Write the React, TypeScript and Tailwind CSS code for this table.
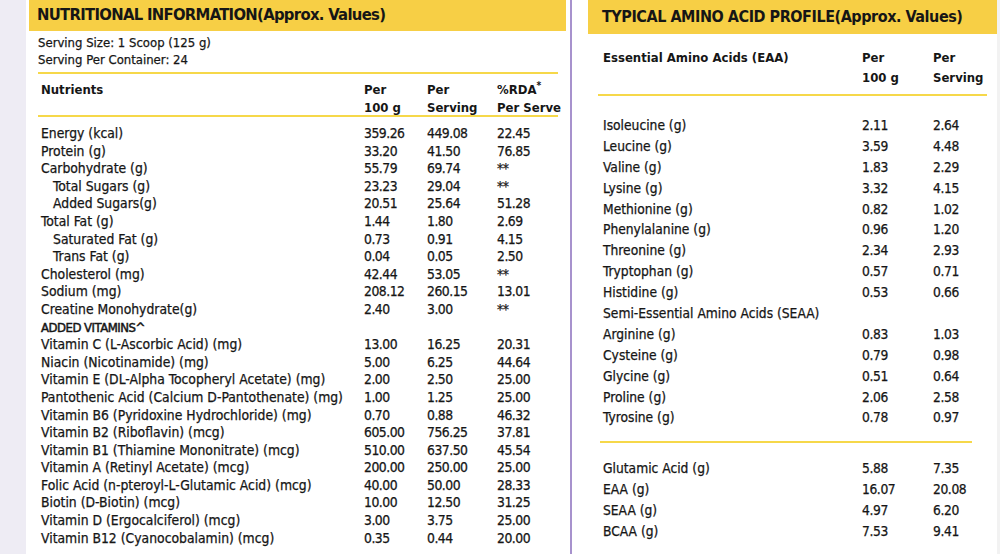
import React from "react";

type Row = { l: string; a?: string; b?: string; c?: string; i?: boolean; bold?: boolean };

const left: Row[] = [
  { l: "Energy (kcal)", a: "359.26", b: "449.08", c: "22.45" },
  { l: "Protein (g)", a: "33.20", b: "41.50", c: "76.85" },
  { l: "Carbohydrate (g)", a: "55.79", b: "69.74", c: "**" },
  { l: "Total Sugars (g)", a: "23.23", b: "29.04", c: "**", i: true },
  { l: "Added Sugars(g)", a: "20.51", b: "25.64", c: "51.28", i: true },
  { l: "Total Fat (g)", a: "1.44", b: "1.80", c: "2.69" },
  { l: "Saturated Fat (g)", a: "0.73", b: "0.91", c: "4.15", i: true },
  { l: "Trans Fat (g)", a: "0.04", b: "0.05", c: "2.50", i: true },
  { l: "Cholesterol (mg)", a: "42.44", b: "53.05", c: "**" },
  { l: "Sodium (mg)", a: "208.12", b: "260.15", c: "13.01" },
  { l: "Creatine Monohydrate(g)", a: "2.40", b: "3.00", c: "**" },
  { l: "ADDED VITAMINS^", bold: true },
  { l: "Vitamin C (L-Ascorbic Acid) (mg)", a: "13.00", b: "16.25", c: "20.31" },
  { l: "Niacin (Nicotinamide) (mg)", a: "5.00", b: "6.25", c: "44.64" },
  { l: "Vitamin E (DL-Alpha Tocopheryl Acetate) (mg)", a: "2.00", b: "2.50", c: "25.00" },
  { l: "Pantothenic Acid (Calcium D-Pantothenate) (mg)", a: "1.00", b: "1.25", c: "25.00" },
  { l: "Vitamin B6 (Pyridoxine Hydrochloride) (mg)", a: "0.70", b: "0.88", c: "46.32" },
  { l: "Vitamin B2 (Riboflavin) (mcg)", a: "605.00", b: "756.25", c: "37.81" },
  { l: "Vitamin B1 (Thiamine Mononitrate) (mcg)", a: "510.00", b: "637.50", c: "45.54" },
  { l: "Vitamin A (Retinyl Acetate) (mcg)", a: "200.00", b: "250.00", c: "25.00" },
  { l: "Folic Acid (n-pteroyl-L-Glutamic Acid) (mcg)", a: "40.00", b: "50.00", c: "28.33" },
  { l: "Biotin (D-Biotin) (mcg)", a: "10.00", b: "12.50", c: "31.25" },
  { l: "Vitamin D (Ergocalciferol) (mcg)", a: "3.00", b: "3.75", c: "25.00" },
  { l: "Vitamin B12 (Cyanocobalamin) (mcg)", a: "0.35", b: "0.44", c: "20.00" },
];

const rightTop: Row[] = [
  { l: "Isoleucine (g)", a: "2.11", b: "2.64" },
  { l: "Leucine (g)", a: "3.59", b: "4.48" },
  { l: "Valine (g)", a: "1.83", b: "2.29" },
  { l: "Lysine (g)", a: "3.32", b: "4.15" },
  { l: "Methionine (g)", a: "0.82", b: "1.02" },
  { l: "Phenylalanine (g)", a: "0.96", b: "1.20" },
  { l: "Threonine (g)", a: "2.34", b: "2.93" },
  { l: "Tryptophan (g)", a: "0.57", b: "0.71" },
  { l: "Histidine (g)", a: "0.53", b: "0.66" },
  { l: "Semi-Essential Amino Acids (SEAA)" },
  { l: "Arginine (g)", a: "0.83", b: "1.03" },
  { l: "Cysteine (g)", a: "0.79", b: "0.98" },
  { l: "Glycine (g)", a: "0.51", b: "0.64" },
  { l: "Proline (g)", a: "2.06", b: "2.58" },
  { l: "Tyrosine (g)", a: "0.78", b: "0.97" },
];

const rightBottom: Row[] = [
  { l: "Glutamic Acid (g)", a: "5.88", b: "7.35" },
  { l: "EAA (g)", a: "16.07", b: "20.08" },
  { l: "SEAA (g)", a: "4.97", b: "6.20" },
  { l: "BCAA (g)", a: "7.53", b: "9.41" },
];

function LeftRow({ r }: { r: Row }) {
  return (
    <div className="grid grid-cols-[323px_63px_70px_60px] h-[17.6px] leading-[17.6px]">
      <div
        className={
          r.bold
            ? "whitespace-nowrap text-[13px] tracking-[-0.5px] [-webkit-text-stroke-width:0.5px]"
            : r.i
            ? "whitespace-nowrap pl-[12px]"
            : "whitespace-nowrap"
        }
      >
        {r.l}
      </div>
      <div className="tracking-[-0.5px]">{r.a}</div>
      <div className="tracking-[-0.5px]">{r.b}</div>
      <div className="tracking-[-0.5px]">{r.c}</div>
    </div>
  );
}

function RightRow({ r }: { r: Row }) {
  return (
    <div className="grid grid-cols-[259px_71px_60px] h-[20.9px] leading-[20.9px]">
      <div className="whitespace-nowrap">{r.l}</div>
      <div className="tracking-[-0.4px]">{r.a}</div>
      <div className="tracking-[-0.4px]">{r.b}</div>
    </div>
  );
}

export default function App() {
  return (
    <div className="w-[1000px] h-[554px] flex bg-white text-[#161616] overflow-hidden font-['DejaVu_Sans_Condensed','Liberation_Sans',sans-serif]">
      <div className="w-[26px] h-full bg-[#eeecf4] shrink-0" />
      <div className="w-[544px] shrink-0 flex flex-col">
        <div className="ml-[3px] w-[537px] h-[31px] bg-[#f7cf45] flex items-center pl-[8px]">
          <span className="text-[16.5px] font-bold tracking-[-0.7px] whitespace-nowrap">NUTRITIONAL INFORMATION(Approx. Values)</span>
        </div>
        <div className="pl-[12px] pt-[4px] text-[13px] leading-[16.5px] h-[41px] [-webkit-text-stroke-width:0.25px]">
          <div>Serving Size: 1 Scoop (125 g)</div>
          <div>Serving Per Container: 24</div>
        </div>
        <div className="ml-[12px] w-[520px] h-[2px] bg-[#f6d84a]" />
        <div className="pl-[15px] pt-[7px] h-[41px] text-[13px] leading-[17.5px] font-bold grid grid-cols-[323px_63px_70px_80px]">
          <div>Nutrients</div>
          <div>Per<br />100 g</div>
          <div>Per<br />Serving</div>
          <div>%RDA<sup className="text-[10px]">*</sup><br />Per Serve</div>
        </div>
        <div className="ml-[12px] w-[520px] h-[2px] bg-[#f6d84a]" />
        <div className="pl-[15px] pt-[8px] text-[13.8px] [-webkit-text-stroke-width:0.25px]">
          {left.map((r, k) => (
            <LeftRow key={k} r={r} />
          ))}
        </div>
      </div>
      <div className="w-[2px] h-full bg-[#a792cd] shrink-0" />
      <div className="w-[425px] shrink-0 flex flex-col">
        <div className="ml-[16px] w-[409px] h-[34px] bg-[#f7cf45] flex items-center pl-[14px]">
          <span className="text-[16px] font-bold tracking-[-0.45px] whitespace-nowrap">TYPICAL AMINO ACID PROFILE(Approx. Values)</span>
        </div>
        <div className="pl-[31px] pt-[14px] h-[60px] text-[13px] leading-[20px] font-bold grid grid-cols-[259px_71px_80px]">
          <div>Essential Amino Acids (EAA)</div>
          <div>Per<br />100 g</div>
          <div>Per<br />Serving</div>
        </div>
        <div className="ml-[26px] w-[389px] h-[2px] bg-[#f6d84a]" />
        <div className="pl-[31px] pt-[19px] text-[13.7px] [-webkit-text-stroke-width:0.25px]">
          {rightTop.map((r, k) => (
            <RightRow key={k} r={r} />
          ))}
        </div>
        <div className="ml-[28px] w-[372px] h-[2px] bg-[#f6d84a] mt-[13px]" />
        <div className="pl-[31px] pt-[15px] text-[13.7px] [-webkit-text-stroke-width:0.25px]">
          {rightBottom.map((r, k) => (
            <RightRow key={k} r={r} />
          ))}
        </div>
      </div>
      <div className="flex-1 h-full bg-[#f2f2f2]" />
    </div>
  );
}
